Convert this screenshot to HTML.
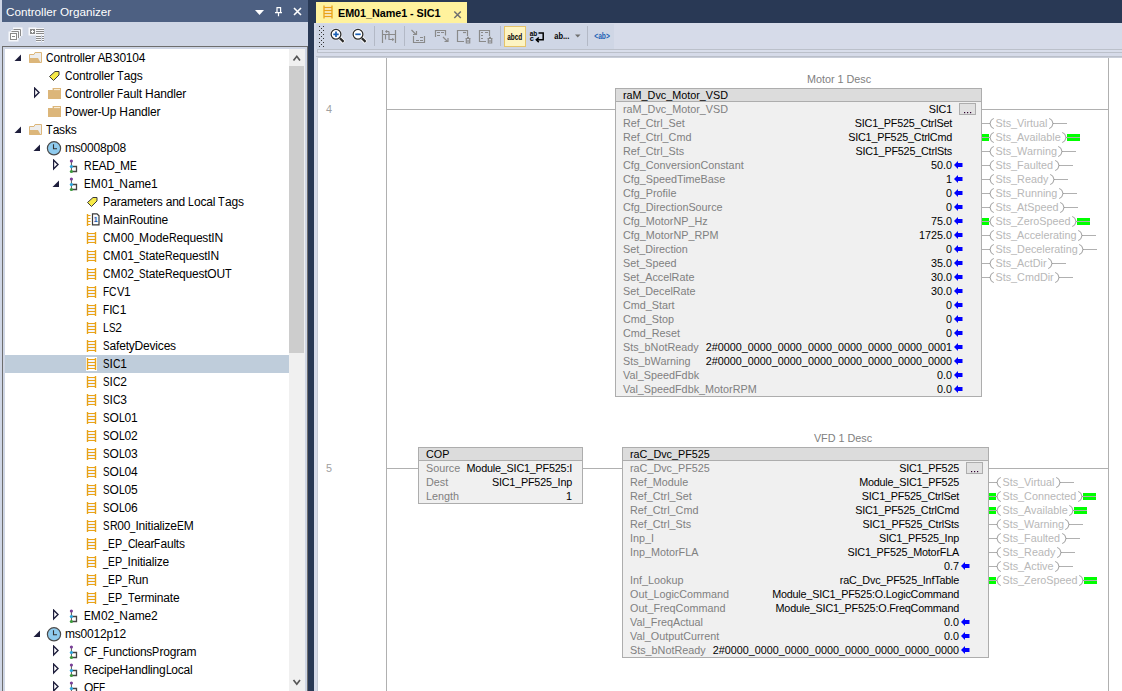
<!DOCTYPE html><html><head><meta charset="utf-8"><style>
*{margin:0;padding:0;box-sizing:border-box}
html,body{width:1122px;height:691px;overflow:hidden;background:#293955;font-family:"Liberation Sans",sans-serif}
.a{position:absolute}
.t{position:absolute;white-space:pre;line-height:1}
#lp{left:0;top:0;width:308px;height:691px;background:#cfd6e5}
#ttl{left:2px;top:0;width:306px;height:22px;background:#4d6082}
#tree{left:2px;top:46px;width:306px;height:645px;background:#cfd6e5;border:1px solid #6d6d6d;border-bottom:0}
.tr{position:absolute;font-size:12px;color:#000;white-space:pre;line-height:1}
.lb{font-size:10.8px;color:#808080}
.vl{font-size:10.8px;color:#000}
.coil{font-size:10.8px;color:#b4b4b4}
</style></head><body><div id="lp" class="a"></div><div id="ttl" class="a"></div><div class="t" style="left:6px;top:5.6px;font-size:11.7px;color:#fff">Controller Organizer</div><svg class="a" style="left:250px;top:4px" width="56" height="16" viewBox="0 0 56 16"><path d="M5 6 L14 6 L9.5 11 Z" fill="#fff"/><path d="M26.5 3.7 H31 M27 3.3 V8.5 M30.6 3.3 V8.5 M25 8.6 H32 M28.5 8.6 V12.3" stroke="#fff" stroke-width="1.2" fill="none"/><path d="M44 4 L51 11 M51 4 L44 11" stroke="#fff" stroke-width="1.6"/></svg><svg class="a" style="left:0px;top:22px" width="50" height="24" viewBox="0 22 50 24"><g fill="none" stroke="#fff" stroke-width="3" opacity="0.85"><path d="M13 29 H21 V36 M11 31.5 H19 V38"/><rect x="10" y="33" width="7" height="7"/><rect x="30" y="29" width="5" height="5"/><path d="M36 29.5 H44 M36 31.5 H44 M36 33.5 H44 M36 36.5 H41 M42 36.5 H44 M36 38.5 H41 M42 38.5 H44 M36 40.5 H41 M42 40.5 H44"/></g><g fill="none" stroke="#8a8a8a" stroke-width="1"><path d="M13.5 29.5 H20.5 V36 M11.5 31.5 H18.5 V38"/><rect x="10.5" y="33.5" width="6" height="6" fill="#fff"/><path d="M12 36.5 H15"/><path d="M36 29.5 H44 M36 31.5 H44 M36 33.5 H44 M36 36.5 H41 M42 36.5 H44 M36 38.5 H41 M42 38.5 H44 M36 40.5 H41 M42 40.5 H44"/></g><rect x="30" y="29" width="5" height="5" fill="#8a8a8a"/><path d="M32.5 30 V33 M31 31.5 H34" stroke="#fff" stroke-width="1"/></svg><div id="tree" class="a"></div><div class="a" style="left:5px;top:49px;width:300px;height:642px;background:#fff"></div><svg class="a" style="left:14px;top:53px" width="8" height="9" viewBox="0 0 8 9"><path d="M0.5 8 L7 1.5 V8 Z" fill="#1e1e3c"/></svg><svg class="a" style="left:27px;top:49px" width="16" height="18" viewBox="0 0 16 18"><path d="M2.5 13.5 V5.5 H7 L8 3.5 H14.5 V13.5 Z" fill="#ededed" stroke="#dcb67a" stroke-width="1"/><path d="M2 9 H11 L13.8 14 H2.5 Z" fill="#dcb67a"/></svg><div class="tr" style="left:46px;top:52px;font-size:12px"><span style="display:inline-block;width:7.47px;transform:scaleX(0.862);transform-origin:0 0">C</span><span style="letter-spacing:-0.20px">o</span><span style="letter-spacing:-0.20px">n</span><span style="letter-spacing:-0.20px">t</span><span style="letter-spacing:-0.20px">r</span><span style="letter-spacing:-0.20px">o</span><span style="letter-spacing:-0.20px">l</span><span style="letter-spacing:-0.20px">l</span><span style="letter-spacing:-0.20px">e</span><span style="letter-spacing:-0.20px">r</span><span style="letter-spacing:-0.20px"> </span><span style="letter-spacing:-0.20px">A</span><span style="display:inline-block;width:7.52px;transform:scaleX(0.938);transform-origin:0 0">B</span><span style="letter-spacing:-0.20px">3</span><span style="letter-spacing:-0.20px">0</span><span style="letter-spacing:-0.20px">1</span><span style="letter-spacing:-0.20px">0</span><span style="letter-spacing:-0.20px">4</span></div><svg class="a" style="left:46px;top:67px" width="16" height="18" viewBox="0 0 16 18"><path d="M3.5 9.5 L9 4.5 H13 V8 L7.5 13.5 Z" fill="#f7ea48" stroke="#3a3a3a" stroke-width="1"/></svg><div class="tr" style="left:65px;top:70px;font-size:12px"><span style="display:inline-block;width:7.47px;transform:scaleX(0.862);transform-origin:0 0">C</span><span style="letter-spacing:-0.20px">o</span><span style="letter-spacing:-0.20px">n</span><span style="letter-spacing:-0.20px">t</span><span style="letter-spacing:-0.20px">r</span><span style="letter-spacing:-0.20px">o</span><span style="letter-spacing:-0.20px">l</span><span style="letter-spacing:-0.20px">l</span><span style="letter-spacing:-0.20px">e</span><span style="letter-spacing:-0.20px">r</span><span style="letter-spacing:-0.20px"> </span><span style="display:inline-block;width:6.64px;transform:scaleX(0.905);transform-origin:0 0">T</span><span style="letter-spacing:-0.20px">a</span><span style="letter-spacing:-0.20px">g</span><span style="letter-spacing:-0.20px">s</span></div><svg class="a" style="left:34px;top:87px" width="8" height="12" viewBox="0 0 8 12"><path d="M0.5 1 L5 5.5 L0.5 10 Z" fill="none" stroke="#1e1e3c" stroke-width="1.4"/></svg><svg class="a" style="left:46px;top:85px" width="16" height="18" viewBox="0 0 16 18"><rect x="2" y="5" width="13" height="9" fill="#dcb67a"/><rect x="6.6" y="3" width="8.4" height="3" fill="#dcb67a"/><path d="M8 4.6 H14" stroke="#fbf3e2" stroke-width="1"/></svg><div class="tr" style="left:65px;top:88px;font-size:12px"><span style="display:inline-block;width:7.47px;transform:scaleX(0.862);transform-origin:0 0">C</span><span style="letter-spacing:-0.20px">o</span><span style="letter-spacing:-0.20px">n</span><span style="letter-spacing:-0.20px">t</span><span style="letter-spacing:-0.20px">r</span><span style="letter-spacing:-0.20px">o</span><span style="letter-spacing:-0.20px">l</span><span style="letter-spacing:-0.20px">l</span><span style="letter-spacing:-0.20px">e</span><span style="letter-spacing:-0.20px">r</span><span style="letter-spacing:-0.20px"> </span><span style="display:inline-block;width:6.14px;transform:scaleX(0.837);transform-origin:0 0">F</span><span style="letter-spacing:-0.20px">a</span><span style="letter-spacing:-0.20px">u</span><span style="letter-spacing:-0.20px">l</span><span style="letter-spacing:-0.20px">t</span><span style="letter-spacing:-0.20px"> </span><span style="letter-spacing:0.10px">H</span><span style="letter-spacing:-0.20px">a</span><span style="letter-spacing:-0.20px">n</span><span style="letter-spacing:-0.20px">d</span><span style="letter-spacing:-0.20px">l</span><span style="letter-spacing:-0.20px">e</span><span style="letter-spacing:-0.20px">r</span></div><svg class="a" style="left:46px;top:103px" width="16" height="18" viewBox="0 0 16 18"><rect x="2" y="5" width="13" height="9" fill="#dcb67a"/><rect x="6.6" y="3" width="8.4" height="3" fill="#dcb67a"/><path d="M8 4.6 H14" stroke="#fbf3e2" stroke-width="1"/></svg><div class="tr" style="left:65px;top:106px;font-size:12px"><span style="display:inline-block;width:7.22px;transform:scaleX(0.900);transform-origin:0 0">P</span><span style="letter-spacing:-0.20px">o</span><span style="letter-spacing:-0.20px">w</span><span style="letter-spacing:-0.20px">e</span><span style="letter-spacing:-0.20px">r</span><span style="letter-spacing:-0.20px">-</span><span style="letter-spacing:-0.20px">U</span><span style="letter-spacing:-0.20px">p</span><span style="letter-spacing:-0.20px"> </span><span style="letter-spacing:0.10px">H</span><span style="letter-spacing:-0.20px">a</span><span style="letter-spacing:-0.20px">n</span><span style="letter-spacing:-0.20px">d</span><span style="letter-spacing:-0.20px">l</span><span style="letter-spacing:-0.20px">e</span><span style="letter-spacing:-0.20px">r</span></div><svg class="a" style="left:14px;top:125px" width="8" height="9" viewBox="0 0 8 9"><path d="M0.5 8 L7 1.5 V8 Z" fill="#1e1e3c"/></svg><svg class="a" style="left:27px;top:121px" width="16" height="18" viewBox="0 0 16 18"><path d="M2.5 13.5 V5.5 H7 L8 3.5 H14.5 V13.5 Z" fill="#ededed" stroke="#dcb67a" stroke-width="1"/><path d="M2 9 H11 L13.8 14 H2.5 Z" fill="#dcb67a"/></svg><div class="tr" style="left:46px;top:124px;font-size:12px"><span style="display:inline-block;width:6.64px;transform:scaleX(0.905);transform-origin:0 0">T</span><span style="letter-spacing:-0.20px">a</span><span style="letter-spacing:-0.20px">s</span><span style="letter-spacing:-0.20px">k</span><span style="letter-spacing:-0.20px">s</span></div><svg class="a" style="left:33px;top:143px" width="8" height="9" viewBox="0 0 8 9"><path d="M0.5 8 L7 1.5 V8 Z" fill="#1e1e3c"/></svg><svg class="a" style="left:46px;top:139px" width="16" height="18" viewBox="0 0 16 18"><circle cx="8" cy="9.3" r="6.6" fill="#8fcbee" stroke="#4a4a4a" stroke-width="1.2"/><path d="M7.5 5.3 V9.8 H11" stroke="#333" stroke-width="1.1" fill="none"/></svg><div class="tr" style="left:65px;top:142px;font-size:12px"><span style="letter-spacing:-0.20px">m</span><span style="letter-spacing:-0.20px">s</span><span style="letter-spacing:-0.20px">0</span><span style="letter-spacing:-0.20px">0</span><span style="letter-spacing:-0.20px">0</span><span style="letter-spacing:-0.20px">8</span><span style="letter-spacing:-0.20px">p</span><span style="letter-spacing:-0.20px">0</span><span style="letter-spacing:-0.20px">8</span></div><svg class="a" style="left:53px;top:159px" width="8" height="12" viewBox="0 0 8 12"><path d="M0.5 1 L5 5.5 L0.5 10 Z" fill="none" stroke="#1e1e3c" stroke-width="1.4"/></svg><svg class="a" style="left:65px;top:157px" width="16" height="18" viewBox="0 0 16 18"><path d="M6.4 4 V14.5" stroke="#555" stroke-width="1"/><path d="M6.4 9.5 H11.5 V14.5 H6.4" stroke="#444" stroke-width="1.3" fill="none"/><circle cx="6.4" cy="4" r="1.6" fill="#7a3f98"/><circle cx="6.4" cy="9.5" r="1.6" fill="#2aa6e0"/><circle cx="6.4" cy="14.5" r="1.6" fill="#3a9a3a"/></svg><div class="tr" style="left:84px;top:160px;font-size:12px"><span style="display:inline-block;width:7.67px;transform:scaleX(0.885);transform-origin:0 0">R</span><span style="display:inline-block;width:6.82px;transform:scaleX(0.850);transform-origin:0 0">E</span><span style="letter-spacing:-0.20px">A</span><span style="letter-spacing:-0.20px">D</span><span style="display:inline-block;width:5.29px;transform:scaleX(0.791);transform-origin:0 0">_</span><span style="letter-spacing:0.30px">M</span><span style="display:inline-block;width:6.82px;transform:scaleX(0.850);transform-origin:0 0">E</span></div><svg class="a" style="left:52px;top:179px" width="8" height="9" viewBox="0 0 8 9"><path d="M0.5 8 L7 1.5 V8 Z" fill="#1e1e3c"/></svg><svg class="a" style="left:65px;top:175px" width="16" height="18" viewBox="0 0 16 18"><path d="M6.4 4 V14.5" stroke="#555" stroke-width="1"/><path d="M6.4 9.5 H11.5 V14.5 H6.4" stroke="#444" stroke-width="1.3" fill="none"/><circle cx="6.4" cy="4" r="1.6" fill="#7a3f98"/><circle cx="6.4" cy="9.5" r="1.6" fill="#2aa6e0"/><circle cx="6.4" cy="14.5" r="1.6" fill="#3a9a3a"/></svg><div class="tr" style="left:84px;top:178px;font-size:12px"><span style="display:inline-block;width:6.82px;transform:scaleX(0.850);transform-origin:0 0">E</span><span style="letter-spacing:0.30px">M</span><span style="letter-spacing:-0.20px">0</span><span style="letter-spacing:-0.20px">1</span><span style="display:inline-block;width:5.29px;transform:scaleX(0.791);transform-origin:0 0">_</span><span style="letter-spacing:0.30px">N</span><span style="letter-spacing:-0.20px">a</span><span style="letter-spacing:-0.20px">m</span><span style="letter-spacing:-0.20px">e</span><span style="letter-spacing:-0.20px">1</span></div><svg class="a" style="left:84px;top:193px" width="16" height="18" viewBox="0 0 16 18"><path d="M3.5 9.5 L9 4.5 H13 V8 L7.5 13.5 Z" fill="#f7ea48" stroke="#3a3a3a" stroke-width="1"/></svg><div class="tr" style="left:103px;top:196px;font-size:12px"><span style="display:inline-block;width:7.22px;transform:scaleX(0.900);transform-origin:0 0">P</span><span style="letter-spacing:-0.20px">a</span><span style="letter-spacing:-0.20px">r</span><span style="letter-spacing:-0.20px">a</span><span style="letter-spacing:-0.20px">m</span><span style="letter-spacing:-0.20px">e</span><span style="letter-spacing:-0.20px">t</span><span style="letter-spacing:-0.20px">e</span><span style="letter-spacing:-0.20px">r</span><span style="letter-spacing:-0.20px">s</span><span style="letter-spacing:-0.20px"> </span><span style="letter-spacing:-0.20px">a</span><span style="letter-spacing:-0.20px">n</span><span style="letter-spacing:-0.20px">d</span><span style="letter-spacing:-0.20px"> </span><span style="display:inline-block;width:5.79px;transform:scaleX(0.865);transform-origin:0 0">L</span><span style="letter-spacing:-0.20px">o</span><span style="letter-spacing:-0.20px">c</span><span style="letter-spacing:-0.20px">a</span><span style="letter-spacing:-0.20px">l</span><span style="letter-spacing:-0.20px"> </span><span style="display:inline-block;width:6.64px;transform:scaleX(0.905);transform-origin:0 0">T</span><span style="letter-spacing:-0.20px">a</span><span style="letter-spacing:-0.20px">g</span><span style="letter-spacing:-0.20px">s</span></div><svg class="a" style="left:84px;top:211px" width="16" height="18" viewBox="0 0 16 18"><path d="M3.5 3 V15" stroke="#e9a318" stroke-width="1.4" fill="none"/><path d="M3.5 4.5 H6.5 M3.5 7.5 H6.5 M3.5 10.5 H6.5 M3.5 13.5 H6.5" stroke="#e9a318" stroke-width="1.1" fill="none"/><path d="M8.5 2.8 H13 L15 4.8 V13.8 H8.5 Z" fill="#fff" stroke="#3a3a3a" stroke-width="1.2"/><rect x="10" y="5.5" width="3.6" height="6" fill="#e8eef8"/><text x="11.8" y="11.2" font-size="7" font-weight="bold" fill="#1e5bb0" text-anchor="middle" font-family="Liberation Sans">1</text></svg><div class="tr" style="left:103px;top:214px;font-size:12px"><span style="letter-spacing:0.30px">M</span><span style="letter-spacing:-0.20px">a</span><span style="letter-spacing:-0.20px">i</span><span style="letter-spacing:-0.20px">n</span><span style="display:inline-block;width:7.67px;transform:scaleX(0.885);transform-origin:0 0">R</span><span style="letter-spacing:-0.20px">o</span><span style="letter-spacing:-0.20px">u</span><span style="letter-spacing:-0.20px">t</span><span style="letter-spacing:-0.20px">i</span><span style="letter-spacing:-0.20px">n</span><span style="letter-spacing:-0.20px">e</span></div><svg class="a" style="left:84px;top:229px" width="16" height="18" viewBox="0 0 16 18"><rect x="3.5" y="4" width="8" height="10" fill="#f4f6fb"/><path d="M3.5 3 V15 M11.5 3 V15" stroke="#e9a318" stroke-width="1.4" fill="none"/><path d="M3.5 4.5 H11.5 M3.5 7.5 H11.5 M3.5 10.5 H11.5 M3.5 13.5 H11.5" stroke="#e9a318" stroke-width="1.1" fill="none"/></svg><div class="tr" style="left:103px;top:232px;font-size:12px"><span style="display:inline-block;width:7.47px;transform:scaleX(0.862);transform-origin:0 0">C</span><span style="letter-spacing:0.30px">M</span><span style="letter-spacing:-0.20px">0</span><span style="letter-spacing:-0.20px">0</span><span style="display:inline-block;width:5.29px;transform:scaleX(0.791);transform-origin:0 0">_</span><span style="letter-spacing:0.30px">M</span><span style="letter-spacing:-0.20px">o</span><span style="letter-spacing:-0.20px">d</span><span style="letter-spacing:-0.20px">e</span><span style="display:inline-block;width:7.67px;transform:scaleX(0.885);transform-origin:0 0">R</span><span style="letter-spacing:-0.20px">e</span><span style="letter-spacing:-0.20px">q</span><span style="letter-spacing:-0.20px">u</span><span style="letter-spacing:-0.20px">e</span><span style="letter-spacing:-0.20px">s</span><span style="letter-spacing:-0.20px">t</span><span style="letter-spacing:-0.20px">I</span><span style="letter-spacing:0.30px">N</span></div><svg class="a" style="left:84px;top:247px" width="16" height="18" viewBox="0 0 16 18"><rect x="3.5" y="4" width="8" height="10" fill="#f4f6fb"/><path d="M3.5 3 V15 M11.5 3 V15" stroke="#e9a318" stroke-width="1.4" fill="none"/><path d="M3.5 4.5 H11.5 M3.5 7.5 H11.5 M3.5 10.5 H11.5 M3.5 13.5 H11.5" stroke="#e9a318" stroke-width="1.1" fill="none"/></svg><div class="tr" style="left:103px;top:250px;font-size:12px"><span style="display:inline-block;width:7.47px;transform:scaleX(0.862);transform-origin:0 0">C</span><span style="letter-spacing:0.30px">M</span><span style="letter-spacing:-0.20px">0</span><span style="letter-spacing:-0.20px">1</span><span style="display:inline-block;width:5.29px;transform:scaleX(0.791);transform-origin:0 0">_</span><span style="display:inline-block;width:6.52px;transform:scaleX(0.813);transform-origin:0 0">S</span><span style="letter-spacing:-0.20px">t</span><span style="letter-spacing:-0.20px">a</span><span style="letter-spacing:-0.20px">t</span><span style="letter-spacing:-0.20px">e</span><span style="display:inline-block;width:7.67px;transform:scaleX(0.885);transform-origin:0 0">R</span><span style="letter-spacing:-0.20px">e</span><span style="letter-spacing:-0.20px">q</span><span style="letter-spacing:-0.20px">u</span><span style="letter-spacing:-0.20px">e</span><span style="letter-spacing:-0.20px">s</span><span style="letter-spacing:-0.20px">t</span><span style="letter-spacing:-0.20px">I</span><span style="letter-spacing:0.30px">N</span></div><svg class="a" style="left:84px;top:265px" width="16" height="18" viewBox="0 0 16 18"><rect x="3.5" y="4" width="8" height="10" fill="#f4f6fb"/><path d="M3.5 3 V15 M11.5 3 V15" stroke="#e9a318" stroke-width="1.4" fill="none"/><path d="M3.5 4.5 H11.5 M3.5 7.5 H11.5 M3.5 10.5 H11.5 M3.5 13.5 H11.5" stroke="#e9a318" stroke-width="1.1" fill="none"/></svg><div class="tr" style="left:103px;top:268px;font-size:12px"><span style="display:inline-block;width:7.47px;transform:scaleX(0.862);transform-origin:0 0">C</span><span style="letter-spacing:0.30px">M</span><span style="letter-spacing:-0.20px">0</span><span style="letter-spacing:-0.20px">2</span><span style="display:inline-block;width:5.29px;transform:scaleX(0.791);transform-origin:0 0">_</span><span style="display:inline-block;width:6.52px;transform:scaleX(0.813);transform-origin:0 0">S</span><span style="letter-spacing:-0.20px">t</span><span style="letter-spacing:-0.20px">a</span><span style="letter-spacing:-0.20px">t</span><span style="letter-spacing:-0.20px">e</span><span style="display:inline-block;width:7.67px;transform:scaleX(0.885);transform-origin:0 0">R</span><span style="letter-spacing:-0.20px">e</span><span style="letter-spacing:-0.20px">q</span><span style="letter-spacing:-0.20px">u</span><span style="letter-spacing:-0.20px">e</span><span style="letter-spacing:-0.20px">s</span><span style="letter-spacing:-0.20px">t</span><span style="letter-spacing:-0.20px">O</span><span style="letter-spacing:-0.20px">U</span><span style="display:inline-block;width:6.64px;transform:scaleX(0.905);transform-origin:0 0">T</span></div><svg class="a" style="left:84px;top:283px" width="16" height="18" viewBox="0 0 16 18"><rect x="3.5" y="4" width="8" height="10" fill="#f4f6fb"/><path d="M3.5 3 V15 M11.5 3 V15" stroke="#e9a318" stroke-width="1.4" fill="none"/><path d="M3.5 4.5 H11.5 M3.5 7.5 H11.5 M3.5 10.5 H11.5 M3.5 13.5 H11.5" stroke="#e9a318" stroke-width="1.1" fill="none"/></svg><div class="tr" style="left:103px;top:286px;font-size:12px"><span style="display:inline-block;width:6.14px;transform:scaleX(0.837);transform-origin:0 0">F</span><span style="display:inline-block;width:7.47px;transform:scaleX(0.862);transform-origin:0 0">C</span><span style="display:inline-block;width:7.42px;transform:scaleX(0.925);transform-origin:0 0">V</span><span style="letter-spacing:-0.20px">1</span></div><svg class="a" style="left:84px;top:301px" width="16" height="18" viewBox="0 0 16 18"><rect x="3.5" y="4" width="8" height="10" fill="#f4f6fb"/><path d="M3.5 3 V15 M11.5 3 V15" stroke="#e9a318" stroke-width="1.4" fill="none"/><path d="M3.5 4.5 H11.5 M3.5 7.5 H11.5 M3.5 10.5 H11.5 M3.5 13.5 H11.5" stroke="#e9a318" stroke-width="1.1" fill="none"/></svg><div class="tr" style="left:103px;top:304px;font-size:12px"><span style="display:inline-block;width:6.14px;transform:scaleX(0.837);transform-origin:0 0">F</span><span style="letter-spacing:-0.20px">I</span><span style="display:inline-block;width:7.47px;transform:scaleX(0.862);transform-origin:0 0">C</span><span style="letter-spacing:-0.20px">1</span></div><svg class="a" style="left:84px;top:319px" width="16" height="18" viewBox="0 0 16 18"><rect x="3.5" y="4" width="8" height="10" fill="#f4f6fb"/><path d="M3.5 3 V15 M11.5 3 V15" stroke="#e9a318" stroke-width="1.4" fill="none"/><path d="M3.5 4.5 H11.5 M3.5 7.5 H11.5 M3.5 10.5 H11.5 M3.5 13.5 H11.5" stroke="#e9a318" stroke-width="1.1" fill="none"/></svg><div class="tr" style="left:103px;top:322px;font-size:12px"><span style="display:inline-block;width:5.79px;transform:scaleX(0.865);transform-origin:0 0">L</span><span style="display:inline-block;width:6.52px;transform:scaleX(0.813);transform-origin:0 0">S</span><span style="letter-spacing:-0.20px">2</span></div><svg class="a" style="left:84px;top:337px" width="16" height="18" viewBox="0 0 16 18"><rect x="3.5" y="4" width="8" height="10" fill="#f4f6fb"/><path d="M3.5 3 V15 M11.5 3 V15" stroke="#e9a318" stroke-width="1.4" fill="none"/><path d="M3.5 4.5 H11.5 M3.5 7.5 H11.5 M3.5 10.5 H11.5 M3.5 13.5 H11.5" stroke="#e9a318" stroke-width="1.1" fill="none"/></svg><div class="tr" style="left:103px;top:340px;font-size:12px"><span style="display:inline-block;width:6.52px;transform:scaleX(0.813);transform-origin:0 0">S</span><span style="letter-spacing:-0.20px">a</span><span style="letter-spacing:-0.20px">f</span><span style="letter-spacing:-0.20px">e</span><span style="letter-spacing:-0.20px">t</span><span style="letter-spacing:-0.20px">y</span><span style="letter-spacing:-0.20px">D</span><span style="letter-spacing:-0.20px">e</span><span style="letter-spacing:-0.20px">v</span><span style="letter-spacing:-0.20px">i</span><span style="letter-spacing:-0.20px">c</span><span style="letter-spacing:-0.20px">e</span><span style="letter-spacing:-0.20px">s</span></div><div class="a" style="left:5px;top:355px;width:284px;height:18px;background:#bfcddb"></div><svg class="a" style="left:84px;top:355px" width="16" height="18" viewBox="0 0 16 18"><rect x="2" y="2" width="11" height="14" fill="#fff"/><rect x="3.5" y="4" width="8" height="10" fill="#f4f6fb"/><path d="M3.5 3 V15 M11.5 3 V15" stroke="#e9a318" stroke-width="1.4" fill="none"/><path d="M3.5 4.5 H11.5 M3.5 7.5 H11.5 M3.5 10.5 H11.5 M3.5 13.5 H11.5" stroke="#e9a318" stroke-width="1.1" fill="none"/></svg><div class="tr" style="left:103px;top:358px;font-size:12px"><span style="display:inline-block;width:6.52px;transform:scaleX(0.813);transform-origin:0 0">S</span><span style="letter-spacing:-0.20px">I</span><span style="display:inline-block;width:7.47px;transform:scaleX(0.862);transform-origin:0 0">C</span><span style="letter-spacing:-0.20px">1</span></div><svg class="a" style="left:84px;top:373px" width="16" height="18" viewBox="0 0 16 18"><rect x="3.5" y="4" width="8" height="10" fill="#f4f6fb"/><path d="M3.5 3 V15 M11.5 3 V15" stroke="#e9a318" stroke-width="1.4" fill="none"/><path d="M3.5 4.5 H11.5 M3.5 7.5 H11.5 M3.5 10.5 H11.5 M3.5 13.5 H11.5" stroke="#e9a318" stroke-width="1.1" fill="none"/></svg><div class="tr" style="left:103px;top:376px;font-size:12px"><span style="display:inline-block;width:6.52px;transform:scaleX(0.813);transform-origin:0 0">S</span><span style="letter-spacing:-0.20px">I</span><span style="display:inline-block;width:7.47px;transform:scaleX(0.862);transform-origin:0 0">C</span><span style="letter-spacing:-0.20px">2</span></div><svg class="a" style="left:84px;top:391px" width="16" height="18" viewBox="0 0 16 18"><rect x="3.5" y="4" width="8" height="10" fill="#f4f6fb"/><path d="M3.5 3 V15 M11.5 3 V15" stroke="#e9a318" stroke-width="1.4" fill="none"/><path d="M3.5 4.5 H11.5 M3.5 7.5 H11.5 M3.5 10.5 H11.5 M3.5 13.5 H11.5" stroke="#e9a318" stroke-width="1.1" fill="none"/></svg><div class="tr" style="left:103px;top:394px;font-size:12px"><span style="display:inline-block;width:6.52px;transform:scaleX(0.813);transform-origin:0 0">S</span><span style="letter-spacing:-0.20px">I</span><span style="display:inline-block;width:7.47px;transform:scaleX(0.862);transform-origin:0 0">C</span><span style="letter-spacing:-0.20px">3</span></div><svg class="a" style="left:84px;top:409px" width="16" height="18" viewBox="0 0 16 18"><rect x="3.5" y="4" width="8" height="10" fill="#f4f6fb"/><path d="M3.5 3 V15 M11.5 3 V15" stroke="#e9a318" stroke-width="1.4" fill="none"/><path d="M3.5 4.5 H11.5 M3.5 7.5 H11.5 M3.5 10.5 H11.5 M3.5 13.5 H11.5" stroke="#e9a318" stroke-width="1.1" fill="none"/></svg><div class="tr" style="left:103px;top:412px;font-size:12px"><span style="display:inline-block;width:6.52px;transform:scaleX(0.813);transform-origin:0 0">S</span><span style="letter-spacing:-0.20px">O</span><span style="display:inline-block;width:5.79px;transform:scaleX(0.865);transform-origin:0 0">L</span><span style="letter-spacing:-0.20px">0</span><span style="letter-spacing:-0.20px">1</span></div><svg class="a" style="left:84px;top:427px" width="16" height="18" viewBox="0 0 16 18"><rect x="3.5" y="4" width="8" height="10" fill="#f4f6fb"/><path d="M3.5 3 V15 M11.5 3 V15" stroke="#e9a318" stroke-width="1.4" fill="none"/><path d="M3.5 4.5 H11.5 M3.5 7.5 H11.5 M3.5 10.5 H11.5 M3.5 13.5 H11.5" stroke="#e9a318" stroke-width="1.1" fill="none"/></svg><div class="tr" style="left:103px;top:430px;font-size:12px"><span style="display:inline-block;width:6.52px;transform:scaleX(0.813);transform-origin:0 0">S</span><span style="letter-spacing:-0.20px">O</span><span style="display:inline-block;width:5.79px;transform:scaleX(0.865);transform-origin:0 0">L</span><span style="letter-spacing:-0.20px">0</span><span style="letter-spacing:-0.20px">2</span></div><svg class="a" style="left:84px;top:445px" width="16" height="18" viewBox="0 0 16 18"><rect x="3.5" y="4" width="8" height="10" fill="#f4f6fb"/><path d="M3.5 3 V15 M11.5 3 V15" stroke="#e9a318" stroke-width="1.4" fill="none"/><path d="M3.5 4.5 H11.5 M3.5 7.5 H11.5 M3.5 10.5 H11.5 M3.5 13.5 H11.5" stroke="#e9a318" stroke-width="1.1" fill="none"/></svg><div class="tr" style="left:103px;top:448px;font-size:12px"><span style="display:inline-block;width:6.52px;transform:scaleX(0.813);transform-origin:0 0">S</span><span style="letter-spacing:-0.20px">O</span><span style="display:inline-block;width:5.79px;transform:scaleX(0.865);transform-origin:0 0">L</span><span style="letter-spacing:-0.20px">0</span><span style="letter-spacing:-0.20px">3</span></div><svg class="a" style="left:84px;top:463px" width="16" height="18" viewBox="0 0 16 18"><rect x="3.5" y="4" width="8" height="10" fill="#f4f6fb"/><path d="M3.5 3 V15 M11.5 3 V15" stroke="#e9a318" stroke-width="1.4" fill="none"/><path d="M3.5 4.5 H11.5 M3.5 7.5 H11.5 M3.5 10.5 H11.5 M3.5 13.5 H11.5" stroke="#e9a318" stroke-width="1.1" fill="none"/></svg><div class="tr" style="left:103px;top:466px;font-size:12px"><span style="display:inline-block;width:6.52px;transform:scaleX(0.813);transform-origin:0 0">S</span><span style="letter-spacing:-0.20px">O</span><span style="display:inline-block;width:5.79px;transform:scaleX(0.865);transform-origin:0 0">L</span><span style="letter-spacing:-0.20px">0</span><span style="letter-spacing:-0.20px">4</span></div><svg class="a" style="left:84px;top:481px" width="16" height="18" viewBox="0 0 16 18"><rect x="3.5" y="4" width="8" height="10" fill="#f4f6fb"/><path d="M3.5 3 V15 M11.5 3 V15" stroke="#e9a318" stroke-width="1.4" fill="none"/><path d="M3.5 4.5 H11.5 M3.5 7.5 H11.5 M3.5 10.5 H11.5 M3.5 13.5 H11.5" stroke="#e9a318" stroke-width="1.1" fill="none"/></svg><div class="tr" style="left:103px;top:484px;font-size:12px"><span style="display:inline-block;width:6.52px;transform:scaleX(0.813);transform-origin:0 0">S</span><span style="letter-spacing:-0.20px">O</span><span style="display:inline-block;width:5.79px;transform:scaleX(0.865);transform-origin:0 0">L</span><span style="letter-spacing:-0.20px">0</span><span style="letter-spacing:-0.20px">5</span></div><svg class="a" style="left:84px;top:499px" width="16" height="18" viewBox="0 0 16 18"><rect x="3.5" y="4" width="8" height="10" fill="#f4f6fb"/><path d="M3.5 3 V15 M11.5 3 V15" stroke="#e9a318" stroke-width="1.4" fill="none"/><path d="M3.5 4.5 H11.5 M3.5 7.5 H11.5 M3.5 10.5 H11.5 M3.5 13.5 H11.5" stroke="#e9a318" stroke-width="1.1" fill="none"/></svg><div class="tr" style="left:103px;top:502px;font-size:12px"><span style="display:inline-block;width:6.52px;transform:scaleX(0.813);transform-origin:0 0">S</span><span style="letter-spacing:-0.20px">O</span><span style="display:inline-block;width:5.79px;transform:scaleX(0.865);transform-origin:0 0">L</span><span style="letter-spacing:-0.20px">0</span><span style="letter-spacing:-0.20px">6</span></div><svg class="a" style="left:84px;top:517px" width="16" height="18" viewBox="0 0 16 18"><rect x="3.5" y="4" width="8" height="10" fill="#f4f6fb"/><path d="M3.5 3 V15 M11.5 3 V15" stroke="#e9a318" stroke-width="1.4" fill="none"/><path d="M3.5 4.5 H11.5 M3.5 7.5 H11.5 M3.5 10.5 H11.5 M3.5 13.5 H11.5" stroke="#e9a318" stroke-width="1.1" fill="none"/></svg><div class="tr" style="left:103px;top:520px;font-size:12px"><span style="display:inline-block;width:6.52px;transform:scaleX(0.813);transform-origin:0 0">S</span><span style="display:inline-block;width:7.67px;transform:scaleX(0.885);transform-origin:0 0">R</span><span style="letter-spacing:-0.20px">0</span><span style="letter-spacing:-0.20px">0</span><span style="display:inline-block;width:5.29px;transform:scaleX(0.791);transform-origin:0 0">_</span><span style="letter-spacing:-0.20px">I</span><span style="letter-spacing:-0.20px">n</span><span style="letter-spacing:-0.20px">i</span><span style="letter-spacing:-0.20px">t</span><span style="letter-spacing:-0.20px">i</span><span style="letter-spacing:-0.20px">a</span><span style="letter-spacing:-0.20px">l</span><span style="letter-spacing:-0.20px">i</span><span style="letter-spacing:-0.20px">z</span><span style="letter-spacing:-0.20px">e</span><span style="display:inline-block;width:6.82px;transform:scaleX(0.850);transform-origin:0 0">E</span><span style="letter-spacing:0.30px">M</span></div><svg class="a" style="left:84px;top:535px" width="16" height="18" viewBox="0 0 16 18"><rect x="3.5" y="4" width="8" height="10" fill="#f4f6fb"/><path d="M3.5 3 V15 M11.5 3 V15" stroke="#e9a318" stroke-width="1.4" fill="none"/><path d="M3.5 4.5 H11.5 M3.5 7.5 H11.5 M3.5 10.5 H11.5 M3.5 13.5 H11.5" stroke="#e9a318" stroke-width="1.1" fill="none"/></svg><div class="tr" style="left:103px;top:538px;font-size:12px"><span style="display:inline-block;width:5.29px;transform:scaleX(0.791);transform-origin:0 0">_</span><span style="display:inline-block;width:6.82px;transform:scaleX(0.850);transform-origin:0 0">E</span><span style="display:inline-block;width:7.22px;transform:scaleX(0.900);transform-origin:0 0">P</span><span style="display:inline-block;width:5.29px;transform:scaleX(0.791);transform-origin:0 0">_</span><span style="display:inline-block;width:7.47px;transform:scaleX(0.862);transform-origin:0 0">C</span><span style="letter-spacing:-0.20px">l</span><span style="letter-spacing:-0.20px">e</span><span style="letter-spacing:-0.20px">a</span><span style="letter-spacing:-0.20px">r</span><span style="display:inline-block;width:6.14px;transform:scaleX(0.837);transform-origin:0 0">F</span><span style="letter-spacing:-0.20px">a</span><span style="letter-spacing:-0.20px">u</span><span style="letter-spacing:-0.20px">l</span><span style="letter-spacing:-0.20px">t</span><span style="letter-spacing:-0.20px">s</span></div><svg class="a" style="left:84px;top:553px" width="16" height="18" viewBox="0 0 16 18"><rect x="3.5" y="4" width="8" height="10" fill="#f4f6fb"/><path d="M3.5 3 V15 M11.5 3 V15" stroke="#e9a318" stroke-width="1.4" fill="none"/><path d="M3.5 4.5 H11.5 M3.5 7.5 H11.5 M3.5 10.5 H11.5 M3.5 13.5 H11.5" stroke="#e9a318" stroke-width="1.1" fill="none"/></svg><div class="tr" style="left:103px;top:556px;font-size:12px"><span style="display:inline-block;width:5.29px;transform:scaleX(0.791);transform-origin:0 0">_</span><span style="display:inline-block;width:6.82px;transform:scaleX(0.850);transform-origin:0 0">E</span><span style="display:inline-block;width:7.22px;transform:scaleX(0.900);transform-origin:0 0">P</span><span style="display:inline-block;width:5.29px;transform:scaleX(0.791);transform-origin:0 0">_</span><span style="letter-spacing:-0.20px">I</span><span style="letter-spacing:-0.20px">n</span><span style="letter-spacing:-0.20px">i</span><span style="letter-spacing:-0.20px">t</span><span style="letter-spacing:-0.20px">i</span><span style="letter-spacing:-0.20px">a</span><span style="letter-spacing:-0.20px">l</span><span style="letter-spacing:-0.20px">i</span><span style="letter-spacing:-0.20px">z</span><span style="letter-spacing:-0.20px">e</span></div><svg class="a" style="left:84px;top:571px" width="16" height="18" viewBox="0 0 16 18"><rect x="3.5" y="4" width="8" height="10" fill="#f4f6fb"/><path d="M3.5 3 V15 M11.5 3 V15" stroke="#e9a318" stroke-width="1.4" fill="none"/><path d="M3.5 4.5 H11.5 M3.5 7.5 H11.5 M3.5 10.5 H11.5 M3.5 13.5 H11.5" stroke="#e9a318" stroke-width="1.1" fill="none"/></svg><div class="tr" style="left:103px;top:574px;font-size:12px"><span style="display:inline-block;width:5.29px;transform:scaleX(0.791);transform-origin:0 0">_</span><span style="display:inline-block;width:6.82px;transform:scaleX(0.850);transform-origin:0 0">E</span><span style="display:inline-block;width:7.22px;transform:scaleX(0.900);transform-origin:0 0">P</span><span style="display:inline-block;width:5.29px;transform:scaleX(0.791);transform-origin:0 0">_</span><span style="display:inline-block;width:7.67px;transform:scaleX(0.885);transform-origin:0 0">R</span><span style="letter-spacing:-0.20px">u</span><span style="letter-spacing:-0.20px">n</span></div><svg class="a" style="left:84px;top:589px" width="16" height="18" viewBox="0 0 16 18"><rect x="3.5" y="4" width="8" height="10" fill="#f4f6fb"/><path d="M3.5 3 V15 M11.5 3 V15" stroke="#e9a318" stroke-width="1.4" fill="none"/><path d="M3.5 4.5 H11.5 M3.5 7.5 H11.5 M3.5 10.5 H11.5 M3.5 13.5 H11.5" stroke="#e9a318" stroke-width="1.1" fill="none"/></svg><div class="tr" style="left:103px;top:592px;font-size:12px"><span style="display:inline-block;width:5.29px;transform:scaleX(0.791);transform-origin:0 0">_</span><span style="display:inline-block;width:6.82px;transform:scaleX(0.850);transform-origin:0 0">E</span><span style="display:inline-block;width:7.22px;transform:scaleX(0.900);transform-origin:0 0">P</span><span style="display:inline-block;width:5.29px;transform:scaleX(0.791);transform-origin:0 0">_</span><span style="display:inline-block;width:6.64px;transform:scaleX(0.905);transform-origin:0 0">T</span><span style="letter-spacing:-0.20px">e</span><span style="letter-spacing:-0.20px">r</span><span style="letter-spacing:-0.20px">m</span><span style="letter-spacing:-0.20px">i</span><span style="letter-spacing:-0.20px">n</span><span style="letter-spacing:-0.20px">a</span><span style="letter-spacing:-0.20px">t</span><span style="letter-spacing:-0.20px">e</span></div><svg class="a" style="left:53px;top:609px" width="8" height="12" viewBox="0 0 8 12"><path d="M0.5 1 L5 5.5 L0.5 10 Z" fill="none" stroke="#1e1e3c" stroke-width="1.4"/></svg><svg class="a" style="left:65px;top:607px" width="16" height="18" viewBox="0 0 16 18"><path d="M6.4 4 V14.5" stroke="#555" stroke-width="1"/><path d="M6.4 9.5 H11.5 V14.5 H6.4" stroke="#444" stroke-width="1.3" fill="none"/><circle cx="6.4" cy="4" r="1.6" fill="#7a3f98"/><circle cx="6.4" cy="9.5" r="1.6" fill="#2aa6e0"/><circle cx="6.4" cy="14.5" r="1.6" fill="#3a9a3a"/></svg><div class="tr" style="left:84px;top:610px;font-size:12px"><span style="display:inline-block;width:6.82px;transform:scaleX(0.850);transform-origin:0 0">E</span><span style="letter-spacing:0.30px">M</span><span style="letter-spacing:-0.20px">0</span><span style="letter-spacing:-0.20px">2</span><span style="display:inline-block;width:5.29px;transform:scaleX(0.791);transform-origin:0 0">_</span><span style="letter-spacing:0.30px">N</span><span style="letter-spacing:-0.20px">a</span><span style="letter-spacing:-0.20px">m</span><span style="letter-spacing:-0.20px">e</span><span style="letter-spacing:-0.20px">2</span></div><svg class="a" style="left:33px;top:629px" width="8" height="9" viewBox="0 0 8 9"><path d="M0.5 8 L7 1.5 V8 Z" fill="#1e1e3c"/></svg><svg class="a" style="left:46px;top:625px" width="16" height="18" viewBox="0 0 16 18"><circle cx="8" cy="9.3" r="6.6" fill="#8fcbee" stroke="#4a4a4a" stroke-width="1.2"/><path d="M7.5 5.3 V9.8 H11" stroke="#333" stroke-width="1.1" fill="none"/></svg><div class="tr" style="left:65px;top:628px;font-size:12px"><span style="letter-spacing:-0.20px">m</span><span style="letter-spacing:-0.20px">s</span><span style="letter-spacing:-0.20px">0</span><span style="letter-spacing:-0.20px">0</span><span style="letter-spacing:-0.20px">1</span><span style="letter-spacing:-0.20px">2</span><span style="letter-spacing:-0.20px">p</span><span style="letter-spacing:-0.20px">1</span><span style="letter-spacing:-0.20px">2</span></div><svg class="a" style="left:53px;top:645px" width="8" height="12" viewBox="0 0 8 12"><path d="M0.5 1 L5 5.5 L0.5 10 Z" fill="none" stroke="#1e1e3c" stroke-width="1.4"/></svg><svg class="a" style="left:65px;top:643px" width="16" height="18" viewBox="0 0 16 18"><path d="M6.4 4 V14.5" stroke="#555" stroke-width="1"/><path d="M6.4 9.5 H11.5 V14.5 H6.4" stroke="#444" stroke-width="1.3" fill="none"/><circle cx="6.4" cy="4" r="1.6" fill="#7a3f98"/><circle cx="6.4" cy="9.5" r="1.6" fill="#2aa6e0"/><circle cx="6.4" cy="14.5" r="1.6" fill="#3a9a3a"/></svg><div class="tr" style="left:84px;top:646px;font-size:12px"><span style="display:inline-block;width:7.47px;transform:scaleX(0.862);transform-origin:0 0">C</span><span style="display:inline-block;width:6.14px;transform:scaleX(0.837);transform-origin:0 0">F</span><span style="display:inline-block;width:5.29px;transform:scaleX(0.791);transform-origin:0 0">_</span><span style="display:inline-block;width:6.14px;transform:scaleX(0.837);transform-origin:0 0">F</span><span style="letter-spacing:-0.20px">u</span><span style="letter-spacing:-0.20px">n</span><span style="letter-spacing:-0.20px">c</span><span style="letter-spacing:-0.20px">t</span><span style="letter-spacing:-0.20px">i</span><span style="letter-spacing:-0.20px">o</span><span style="letter-spacing:-0.20px">n</span><span style="letter-spacing:-0.20px">s</span><span style="display:inline-block;width:7.22px;transform:scaleX(0.900);transform-origin:0 0">P</span><span style="letter-spacing:-0.20px">r</span><span style="letter-spacing:-0.20px">o</span><span style="letter-spacing:-0.20px">g</span><span style="letter-spacing:-0.20px">r</span><span style="letter-spacing:-0.20px">a</span><span style="letter-spacing:-0.20px">m</span></div><svg class="a" style="left:53px;top:663px" width="8" height="12" viewBox="0 0 8 12"><path d="M0.5 1 L5 5.5 L0.5 10 Z" fill="none" stroke="#1e1e3c" stroke-width="1.4"/></svg><svg class="a" style="left:65px;top:661px" width="16" height="18" viewBox="0 0 16 18"><path d="M6.4 4 V14.5" stroke="#555" stroke-width="1"/><path d="M6.4 9.5 H11.5 V14.5 H6.4" stroke="#444" stroke-width="1.3" fill="none"/><circle cx="6.4" cy="4" r="1.6" fill="#7a3f98"/><circle cx="6.4" cy="9.5" r="1.6" fill="#2aa6e0"/><circle cx="6.4" cy="14.5" r="1.6" fill="#3a9a3a"/></svg><div class="tr" style="left:84px;top:664px;font-size:12px"><span style="display:inline-block;width:7.67px;transform:scaleX(0.885);transform-origin:0 0">R</span><span style="letter-spacing:-0.20px">e</span><span style="letter-spacing:-0.20px">c</span><span style="letter-spacing:-0.20px">i</span><span style="letter-spacing:-0.20px">p</span><span style="letter-spacing:-0.20px">e</span><span style="letter-spacing:0.10px">H</span><span style="letter-spacing:-0.20px">a</span><span style="letter-spacing:-0.20px">n</span><span style="letter-spacing:-0.20px">d</span><span style="letter-spacing:-0.20px">l</span><span style="letter-spacing:-0.20px">i</span><span style="letter-spacing:-0.20px">n</span><span style="letter-spacing:-0.20px">g</span><span style="display:inline-block;width:5.79px;transform:scaleX(0.865);transform-origin:0 0">L</span><span style="letter-spacing:-0.20px">o</span><span style="letter-spacing:-0.20px">c</span><span style="letter-spacing:-0.20px">a</span><span style="letter-spacing:-0.20px">l</span></div><svg class="a" style="left:53px;top:681px" width="8" height="12" viewBox="0 0 8 12"><path d="M0.5 1 L5 5.5 L0.5 10 Z" fill="none" stroke="#1e1e3c" stroke-width="1.4"/></svg><svg class="a" style="left:65px;top:679px" width="16" height="18" viewBox="0 0 16 18"><path d="M6.4 4 V14.5" stroke="#555" stroke-width="1"/><path d="M6.4 9.5 H11.5 V14.5 H6.4" stroke="#444" stroke-width="1.3" fill="none"/><circle cx="6.4" cy="4" r="1.6" fill="#7a3f98"/><circle cx="6.4" cy="9.5" r="1.6" fill="#2aa6e0"/><circle cx="6.4" cy="14.5" r="1.6" fill="#3a9a3a"/></svg><div class="tr" style="left:84px;top:682px;font-size:12px"><span style="letter-spacing:-0.20px">O</span><span style="display:inline-block;width:6.14px;transform:scaleX(0.837);transform-origin:0 0">F</span><span style="display:inline-block;width:6.14px;transform:scaleX(0.837);transform-origin:0 0">F</span></div><div class="a" style="left:289px;top:49px;width:16px;height:642px;background:#f0f0f0"></div><div class="a" style="left:289px;top:66px;width:15px;height:287px;background:#cdcdcd"></div><svg class="a" style="left:289px;top:49px" width="16" height="17" viewBox="289 49 16 17"><path d="M293.5 60.5 L296.8 56.3 L300 60.5" stroke="#555" stroke-width="1.7" fill="none"/></svg><svg class="a" style="left:289px;top:674px" width="16" height="17" viewBox="0 0 16 17"><path d="M4.5 6 L7.8 10.2 L11 6" stroke="#555" stroke-width="1.7" fill="none"/></svg><div class="a" style="left:316px;top:2px;width:151px;height:22px;background:#fff29d"></div><svg class="a" style="left:320px;top:3px" width="16" height="18" viewBox="0 0 16 18"><rect x="4" y="3" width="8" height="12" fill="#fdf8e0"/><path d="M4 2.5 V15.5 M12 2.5 V15.5 M4 4.5 H12 M4 7.5 H12 M4 10.5 H12 M4 13.5 H12" stroke="#e9a318" stroke-width="1.3" fill="none"/></svg><div class="t" style="left:338px;top:8px;font-size:10.8px;font-weight:bold;color:#000;letter-spacing:-0.05px">EM01_Name1 - SIC1</div><svg class="a" style="left:452px;top:8.5px" width="11" height="11" viewBox="0 0 11 11"><path d="M2.3 2.5 L8.8 9 M8.8 2.5 L2.3 9" stroke="#6f6f6f" stroke-width="1.5"/></svg><div class="a" style="left:314px;top:23px;width:808px;height:668px;background:#d6dbe9"></div><div class="a" style="left:316px;top:24px;width:298px;height:25px;background:#cfd6e5"></div><div class="a" style="left:317px;top:49px;width:805px;height:4px;background:#d9deeb;border:1px solid #bbc0ca;border-right:0"></div><div class="a" style="left:316px;top:56px;width:806px;height:1px;background:#bbc0ca"></div><div class="a" style="left:317px;top:57px;width:805px;height:634px;background:#c8cdd8"></div><div class="a" style="left:318px;top:58px;width:804px;height:633px;background:#fff"></div><svg class="a" style="left:316px;top:23px" width="300" height="26" viewBox="316 23 300 26"><rect x="319" y="26" width="1" height="1" fill="#333"/><rect x="323" y="26" width="1" height="1" fill="#333"/><rect x="321" y="28" width="1" height="1" fill="#333"/><rect x="319" y="30" width="1" height="1" fill="#333"/><rect x="323" y="30" width="1" height="1" fill="#333"/><rect x="321" y="32" width="1" height="1" fill="#333"/><rect x="319" y="34" width="1" height="1" fill="#333"/><rect x="323" y="34" width="1" height="1" fill="#333"/><rect x="321" y="36" width="1" height="1" fill="#333"/><rect x="319" y="38" width="1" height="1" fill="#333"/><rect x="323" y="38" width="1" height="1" fill="#333"/><rect x="321" y="40" width="1" height="1" fill="#333"/><rect x="319" y="42" width="1" height="1" fill="#333"/><rect x="323" y="42" width="1" height="1" fill="#333"/><rect x="321" y="44" width="1" height="1" fill="#333"/><rect x="319" y="46" width="1" height="1" fill="#333"/><rect x="323" y="46" width="1" height="1" fill="#333"/><g><circle cx="336" cy="34.3" r="6" fill="#fff" opacity="0.8"/><circle cx="336" cy="34.3" r="4.9" fill="#fff" stroke="#2b2b2b" stroke-width="1.3"/><path d="M339.8 38.1 L344 42.3" stroke="#fff" stroke-width="4"/><path d="M339.8 38.1 L343.6 41.9" stroke="#2b2b2b" stroke-width="2.2"/><path d="M333.3 34.3 H338.7 M336 31.6 V37" stroke="#1a5fb4" stroke-width="1.7"/></g><g><circle cx="358" cy="34.3" r="6" fill="#fff" opacity="0.8"/><circle cx="358" cy="34.3" r="4.9" fill="#fff" stroke="#2b2b2b" stroke-width="1.3"/><path d="M361.8 38.1 L366 42.3" stroke="#fff" stroke-width="4"/><path d="M361.8 38.1 L365.6 41.9" stroke="#2b2b2b" stroke-width="2.2"/><path d="M355.3 34.3 H360.7" stroke="#1a5fb4" stroke-width="1.7"/></g><path d="M374.5 26 V46 M404.5 26 V46 M500.5 26 V46 M587.5 26 V46" stroke="#b3b9c6" stroke-width="1"/><g fill="none" stroke="#8a8a8a" stroke-width="1.2"><path d="M382.5 30 V43 M395.5 30 V43 M382.5 34.5 H395.5"/><path d="M389 31.5 H386 M387 30.3 L385.8 31.5 L387 32.7"/><path d="M389 31.5 V39.5 H393.5 M392.3 38.3 L393.5 39.5 L392.3 40.7"/><path d="M385.5 34.5 V39.5"/></g><g fill="none" stroke="#8a8a8a" stroke-width="1.2"><path d="M411.5 30 L416 34.5 M413 34.5 H416.5 V31"/><path d="M413.5 36 V42.5 H424.5 V36"/><path d="M420 37.5 H423 M416 40.5 H419 M420 40.5 H423"/></g><g fill="none" stroke="#8a8a8a" stroke-width="1.2"><path d="M435.5 37 V30.5 H445.5 V35.5"/><path d="M437 32.5 H440 M441 32.5 H444 M437 35.5 H440"/><path d="M443 37 L447.5 41.5 M444.5 41.5 H448 V38"/></g><g fill="none" stroke="#8a8a8a" stroke-width="1.2"><path d="M464 41.5 H457.5 V30.5 H467.5 V36"/><path d="M463 32.5 H466"/><path d="M465.5 38.5 H470.5 M466.3 38.5 V43 H469.7 V38.5 M468 40 V42 M467 37.3 H469"/></g><g fill="none" stroke="#8a8a8a" stroke-width="1.2"><path d="M486 41.5 H479.5 V30.5 H489.5 V36"/><path d="M481 32.5 H483 M485 32.5 H488 M481 35.5 H483 M481 38.5 H483"/><path d="M487.5 38.5 H492.5 M488.3 38.5 V43 H491.7 V38.5 M490 40 V42 M489 37.3 H491"/></g><rect x="504.5" y="26.5" width="21" height="20" fill="#fdf4c2" stroke="#e6c46a" stroke-width="1"/><text x="507.3" y="39.5" font-size="8.2" font-weight="bold" fill="#000" font-family="Liberation Sans" textLength="15" lengthAdjust="spacingAndGlyphs">abcd</text><text x="529.8" y="35.6" font-size="7.4" font-weight="bold" fill="#000" font-family="Liberation Sans" textLength="7.5" lengthAdjust="spacingAndGlyphs">ab</text><text x="529.8" y="40.8" font-size="7.4" font-weight="bold" fill="#000" font-family="Liberation Sans">c</text><path d="M538.5 33 H543.2 V39.8 H536.5 M538.8 37.5 L536.3 39.8 L538.8 42.1" stroke="#000" stroke-width="1.5" fill="none"/><text x="554.3" y="38.8" font-size="8.2" font-weight="bold" fill="#000" font-family="Liberation Sans" textLength="15" lengthAdjust="spacingAndGlyphs">ab...</text><path d="M575 34.5 H580.5 L577.75 37.5 Z" fill="#707070"/><text x="594.3" y="39.2" font-size="8.2" font-weight="bold" fill="#1a5fb4" font-family="Liberation Sans" textLength="15.5" lengthAdjust="spacingAndGlyphs">&lt;ab&gt;</text></svg><div class="a" style="left:386px;top:58px;width:1px;height:633px;background:#b0b0b0"></div><div class="a" style="left:1108px;top:58px;width:1px;height:633px;background:#b0b0b0"></div><div class="t" style="left:326px;top:104px;font-size:10.8px;color:#a0a0a0">4</div><div class="t" style="left:326px;top:463px;font-size:10.8px;color:#a0a0a0">5</div><div class="a" style="left:387px;top:109px;width:228px;height:1px;background:#b0b0b0"></div><div class="a" style="left:982px;top:109px;width:126px;height:1px;background:#b0b0b0"></div><div class="t" style="left:839px;top:74px;width:200px;margin-left:-100px;text-align:center;font-size:10.8px;color:#808080">Motor 1 Desc</div><div class="a" style="left:615px;top:88px;width:367px;height:309px;background:#f0f0f0;border:1px solid #adadad"></div><div class="a" style="left:616px;top:89px;width:365px;height:13px;background:#dcdcdc;border-bottom:1px solid #adadad"></div><div class="t" style="left:623px;top:90px;font-size:10.8px;color:#000">raM_Dvc_Motor_VSD</div><div class="t" style="left:623px;top:104px;font-size:10.8px;color:#808080">raM_Dvc_Motor_VSD</div><div class="t" style="right:170px;top:104px;font-size:10.8px;color:#000;letter-spacing:-0.2px">SIC1</div><div class="a" style="left:959px;top:103px;width:17px;height:12px;background:#e1e1e1;border:1px solid #adadad"></div><svg class="a" style="left:959px;top:103px" width="17" height="12" viewBox="0 0 17 12"><rect x="5" y="9" width="1.2" height="1.2" fill="#300030"/><rect x="8" y="9" width="1.2" height="1.2" fill="#300030"/><rect x="11" y="9" width="1.2" height="1.2" fill="#300030"/></svg><div class="t" style="left:623px;top:118px;font-size:10.8px;color:#808080">Ref_Ctrl_Set</div><div class="t" style="right:170px;top:118px;font-size:10.8px;color:#000;letter-spacing:-0.2px">SIC1_PF525_CtrlSet</div><div class="t" style="left:623px;top:132px;font-size:10.8px;color:#808080">Ref_Ctrl_Cmd</div><div class="t" style="right:170px;top:132px;font-size:10.8px;color:#000;letter-spacing:-0.2px">SIC1_PF525_CtrlCmd</div><div class="t" style="left:623px;top:146px;font-size:10.8px;color:#808080">Ref_Ctrl_Sts</div><div class="t" style="right:170px;top:146px;font-size:10.8px;color:#000;letter-spacing:-0.2px">SIC1_PF525_CtrlSts</div><div class="t" style="left:623px;top:160px;font-size:10.8px;color:#808080">Cfg_ConversionConstant</div><div class="t" style="right:170px;top:160px;font-size:10.8px;color:#000">50.0</div><svg class="a" style="left:954px;top:160px" width="10" height="10" viewBox="0 0 10 10"><path d="M0 5 L4 1 V3 H8.5 V7 H4 V9 Z" fill="#0000ff"/></svg><div class="t" style="left:623px;top:174px;font-size:10.8px;color:#808080">Cfg_SpeedTimeBase</div><div class="t" style="right:170px;top:174px;font-size:10.8px;color:#000">1</div><svg class="a" style="left:954px;top:174px" width="10" height="10" viewBox="0 0 10 10"><path d="M0 5 L4 1 V3 H8.5 V7 H4 V9 Z" fill="#0000ff"/></svg><div class="t" style="left:623px;top:188px;font-size:10.8px;color:#808080">Cfg_Profile</div><div class="t" style="right:170px;top:188px;font-size:10.8px;color:#000">0</div><svg class="a" style="left:954px;top:188px" width="10" height="10" viewBox="0 0 10 10"><path d="M0 5 L4 1 V3 H8.5 V7 H4 V9 Z" fill="#0000ff"/></svg><div class="t" style="left:623px;top:202px;font-size:10.8px;color:#808080">Cfg_DirectionSource</div><div class="t" style="right:170px;top:202px;font-size:10.8px;color:#000">0</div><svg class="a" style="left:954px;top:202px" width="10" height="10" viewBox="0 0 10 10"><path d="M0 5 L4 1 V3 H8.5 V7 H4 V9 Z" fill="#0000ff"/></svg><div class="t" style="left:623px;top:216px;font-size:10.8px;color:#808080">Cfg_MotorNP_Hz</div><div class="t" style="right:170px;top:216px;font-size:10.8px;color:#000">75.0</div><svg class="a" style="left:954px;top:216px" width="10" height="10" viewBox="0 0 10 10"><path d="M0 5 L4 1 V3 H8.5 V7 H4 V9 Z" fill="#0000ff"/></svg><div class="t" style="left:623px;top:230px;font-size:10.8px;color:#808080">Cfg_MotorNP_RPM</div><div class="t" style="right:170px;top:230px;font-size:10.8px;color:#000">1725.0</div><svg class="a" style="left:954px;top:230px" width="10" height="10" viewBox="0 0 10 10"><path d="M0 5 L4 1 V3 H8.5 V7 H4 V9 Z" fill="#0000ff"/></svg><div class="t" style="left:623px;top:244px;font-size:10.8px;color:#808080">Set_Direction</div><div class="t" style="right:170px;top:244px;font-size:10.8px;color:#000">0</div><svg class="a" style="left:954px;top:244px" width="10" height="10" viewBox="0 0 10 10"><path d="M0 5 L4 1 V3 H8.5 V7 H4 V9 Z" fill="#0000ff"/></svg><div class="t" style="left:623px;top:258px;font-size:10.8px;color:#808080">Set_Speed</div><div class="t" style="right:170px;top:258px;font-size:10.8px;color:#000">35.0</div><svg class="a" style="left:954px;top:258px" width="10" height="10" viewBox="0 0 10 10"><path d="M0 5 L4 1 V3 H8.5 V7 H4 V9 Z" fill="#0000ff"/></svg><div class="t" style="left:623px;top:272px;font-size:10.8px;color:#808080">Set_AccelRate</div><div class="t" style="right:170px;top:272px;font-size:10.8px;color:#000">30.0</div><svg class="a" style="left:954px;top:272px" width="10" height="10" viewBox="0 0 10 10"><path d="M0 5 L4 1 V3 H8.5 V7 H4 V9 Z" fill="#0000ff"/></svg><div class="t" style="left:623px;top:286px;font-size:10.8px;color:#808080">Set_DecelRate</div><div class="t" style="right:170px;top:286px;font-size:10.8px;color:#000">30.0</div><svg class="a" style="left:954px;top:286px" width="10" height="10" viewBox="0 0 10 10"><path d="M0 5 L4 1 V3 H8.5 V7 H4 V9 Z" fill="#0000ff"/></svg><div class="t" style="left:623px;top:300px;font-size:10.8px;color:#808080">Cmd_Start</div><div class="t" style="right:170px;top:300px;font-size:10.8px;color:#000">0</div><svg class="a" style="left:954px;top:300px" width="10" height="10" viewBox="0 0 10 10"><path d="M0 5 L4 1 V3 H8.5 V7 H4 V9 Z" fill="#0000ff"/></svg><div class="t" style="left:623px;top:314px;font-size:10.8px;color:#808080">Cmd_Stop</div><div class="t" style="right:170px;top:314px;font-size:10.8px;color:#000">0</div><svg class="a" style="left:954px;top:314px" width="10" height="10" viewBox="0 0 10 10"><path d="M0 5 L4 1 V3 H8.5 V7 H4 V9 Z" fill="#0000ff"/></svg><div class="t" style="left:623px;top:328px;font-size:10.8px;color:#808080">Cmd_Reset</div><div class="t" style="right:170px;top:328px;font-size:10.8px;color:#000">0</div><svg class="a" style="left:954px;top:328px" width="10" height="10" viewBox="0 0 10 10"><path d="M0 5 L4 1 V3 H8.5 V7 H4 V9 Z" fill="#0000ff"/></svg><div class="t" style="left:623px;top:342px;font-size:10.8px;color:#808080">Sts_bNotReady</div><div class="t" style="right:170px;top:342px;font-size:10.8px;color:#000">2#0000_0000_0000_0000_0000_0000_0000_0001</div><svg class="a" style="left:954px;top:342px" width="10" height="10" viewBox="0 0 10 10"><path d="M0 5 L4 1 V3 H8.5 V7 H4 V9 Z" fill="#0000ff"/></svg><div class="t" style="left:623px;top:356px;font-size:10.8px;color:#808080">Sts_bWarning</div><div class="t" style="right:170px;top:356px;font-size:10.8px;color:#000">2#0000_0000_0000_0000_0000_0000_0000_0000</div><svg class="a" style="left:954px;top:356px" width="10" height="10" viewBox="0 0 10 10"><path d="M0 5 L4 1 V3 H8.5 V7 H4 V9 Z" fill="#0000ff"/></svg><div class="t" style="left:623px;top:370px;font-size:10.8px;color:#808080">Val_SpeedFdbk</div><div class="t" style="right:170px;top:370px;font-size:10.8px;color:#000">0.0</div><svg class="a" style="left:954px;top:370px" width="10" height="10" viewBox="0 0 10 10"><path d="M0 5 L4 1 V3 H8.5 V7 H4 V9 Z" fill="#0000ff"/></svg><div class="t" style="left:623px;top:384px;font-size:10.8px;color:#808080">Val_SpeedFdbk_MotorRPM</div><div class="t" style="right:170px;top:384px;font-size:10.8px;color:#000">0.0</div><svg class="a" style="left:954px;top:384px" width="10" height="10" viewBox="0 0 10 10"><path d="M0 5 L4 1 V3 H8.5 V7 H4 V9 Z" fill="#0000ff"/></svg><div class="a" style="left:387px;top:468px;width:31px;height:1px;background:#b0b0b0"></div><div class="a" style="left:583px;top:468px;width:39px;height:1px;background:#b0b0b0"></div><div class="a" style="left:989px;top:468px;width:119px;height:1px;background:#b0b0b0"></div><div class="t" style="left:843px;top:433px;width:200px;margin-left:-100px;text-align:center;font-size:10.8px;color:#808080">VFD 1 Desc</div><div class="a" style="left:418px;top:447px;width:165px;height:57px;background:#f0f0f0;border:1px solid #adadad"></div><div class="a" style="left:419px;top:448px;width:163px;height:13px;background:#dcdcdc;border-bottom:1px solid #adadad"></div><div class="t" style="left:426px;top:449px;font-size:10.8px;color:#000">COP</div><div class="t" style="left:426px;top:463px;font-size:10.8px;color:#808080">Source</div><div class="t" style="right:550px;top:463px;font-size:10.8px;color:#000;letter-spacing:-0.2px">Module_SIC1_PF525:I</div><div class="t" style="left:426px;top:477px;font-size:10.8px;color:#808080">Dest</div><div class="t" style="right:550px;top:477px;font-size:10.8px;color:#000;letter-spacing:-0.2px">SIC1_PF525_Inp</div><div class="t" style="left:426px;top:491px;font-size:10.8px;color:#808080">Length</div><div class="t" style="right:550px;top:491px;font-size:10.8px;color:#000">1</div><div class="a" style="left:622px;top:447px;width:367px;height:211px;background:#f0f0f0;border:1px solid #adadad"></div><div class="a" style="left:623px;top:448px;width:365px;height:13px;background:#dcdcdc;border-bottom:1px solid #adadad"></div><div class="t" style="left:630px;top:449px;font-size:10.8px;color:#000">raC_Dvc_PF525</div><div class="t" style="left:630px;top:463px;font-size:10.8px;color:#808080">raC_Dvc_PF525</div><div class="t" style="right:163px;top:463px;font-size:10.8px;color:#000;letter-spacing:-0.2px">SIC1_PF525</div><div class="a" style="left:966px;top:462px;width:17px;height:12px;background:#e1e1e1;border:1px solid #adadad"></div><svg class="a" style="left:966px;top:462px" width="17" height="12" viewBox="0 0 17 12"><rect x="5" y="9" width="1.2" height="1.2" fill="#300030"/><rect x="8" y="9" width="1.2" height="1.2" fill="#300030"/><rect x="11" y="9" width="1.2" height="1.2" fill="#300030"/></svg><div class="t" style="left:630px;top:477px;font-size:10.8px;color:#808080">Ref_Module</div><div class="t" style="right:163px;top:477px;font-size:10.8px;color:#000;letter-spacing:-0.2px">Module_SIC1_PF525</div><div class="t" style="left:630px;top:491px;font-size:10.8px;color:#808080">Ref_Ctrl_Set</div><div class="t" style="right:163px;top:491px;font-size:10.8px;color:#000;letter-spacing:-0.2px">SIC1_PF525_CtrlSet</div><div class="t" style="left:630px;top:505px;font-size:10.8px;color:#808080">Ref_Ctrl_Cmd</div><div class="t" style="right:163px;top:505px;font-size:10.8px;color:#000;letter-spacing:-0.2px">SIC1_PF525_CtrlCmd</div><div class="t" style="left:630px;top:519px;font-size:10.8px;color:#808080">Ref_Ctrl_Sts</div><div class="t" style="right:163px;top:519px;font-size:10.8px;color:#000;letter-spacing:-0.2px">SIC1_PF525_CtrlSts</div><div class="t" style="left:630px;top:533px;font-size:10.8px;color:#808080">Inp_I</div><div class="t" style="right:163px;top:533px;font-size:10.8px;color:#000;letter-spacing:-0.2px">SIC1_PF525_Inp</div><div class="t" style="left:630px;top:547px;font-size:10.8px;color:#808080">Inp_MotorFLA</div><div class="t" style="right:163px;top:547px;font-size:10.8px;color:#000;letter-spacing:-0.2px">SIC1_PF525_MotorFLA</div><div class="t" style="right:163px;top:561px;font-size:10.8px;color:#000">0.7</div><svg class="a" style="left:961px;top:561px" width="10" height="10" viewBox="0 0 10 10"><path d="M0 5 L4 1 V3 H8.5 V7 H4 V9 Z" fill="#0000ff"/></svg><div class="t" style="left:630px;top:575px;font-size:10.8px;color:#808080">Inf_Lookup</div><div class="t" style="right:163px;top:575px;font-size:10.8px;color:#000;letter-spacing:-0.2px">raC_Dvc_PF525_InfTable</div><div class="t" style="left:630px;top:589px;font-size:10.8px;color:#808080">Out_LogicCommand</div><div class="t" style="right:163px;top:589px;font-size:10.8px;color:#000;letter-spacing:-0.2px">Module_SIC1_PF525:O.LogicCommand</div><div class="t" style="left:630px;top:603px;font-size:10.8px;color:#808080">Out_FreqCommand</div><div class="t" style="right:163px;top:603px;font-size:10.8px;color:#000;letter-spacing:-0.2px">Module_SIC1_PF525:O.FreqCommand</div><div class="t" style="left:630px;top:617px;font-size:10.8px;color:#808080">Val_FreqActual</div><div class="t" style="right:163px;top:617px;font-size:10.8px;color:#000">0.0</div><svg class="a" style="left:961px;top:617px" width="10" height="10" viewBox="0 0 10 10"><path d="M0 5 L4 1 V3 H8.5 V7 H4 V9 Z" fill="#0000ff"/></svg><div class="t" style="left:630px;top:631px;font-size:10.8px;color:#808080">Val_OutputCurrent</div><div class="t" style="right:163px;top:631px;font-size:10.8px;color:#000">0.0</div><svg class="a" style="left:961px;top:631px" width="10" height="10" viewBox="0 0 10 10"><path d="M0 5 L4 1 V3 H8.5 V7 H4 V9 Z" fill="#0000ff"/></svg><div class="t" style="left:630px;top:645px;font-size:10.8px;color:#808080">Sts_bNotReady</div><div class="t" style="right:163px;top:645px;font-size:10.8px;color:#000">2#0000_0000_0000_0000_0000_0000_0000_0000</div><svg class="a" style="left:961px;top:645px" width="10" height="10" viewBox="0 0 10 10"><path d="M0 5 L4 1 V3 H8.5 V7 H4 V9 Z" fill="#0000ff"/></svg><div class="a" style="left:982px;top:117px;height:13px;display:flex;align-items:center"><div style="width:7px;height:1px;background:#b0b0b0"></div><svg width="6" height="13" viewBox="0 0 6 13" style="display:block"><path d="M4.8 1.5 Q1.6 2.5 1.5 5 L1.1 6.5 L1.5 8 Q1.6 10.5 4.8 11.5 M0 6.5 H1.2" stroke="#a0a0a0" stroke-width="1" fill="none"/></svg><span style="font-size:10.8px;color:#b8b8b8;white-space:pre;line-height:13px;padding-left:0.5px;padding-right:0.5px">Sts_Virtual</span><svg width="6" height="13" viewBox="0 0 6 13" style="display:block"><path d="M1.2 1.5 Q4.4 2.5 4.5 5 L4.9 6.5 L4.5 8 Q4.4 10.5 1.2 11.5 M4.8 6.5 H6" stroke="#a0a0a0" stroke-width="1" fill="none"/></svg><div style="width:13px;height:1px;background:#b0b0b0"></div></div><div class="a" style="left:982px;top:131px;height:13px;display:flex;align-items:center"><div style="width:7px;height:7px;background:#00ff00;position:relative"><div style="position:absolute;left:0;top:3px;width:7px;height:1px;background:#b0b0b0"></div></div><svg width="6" height="13" viewBox="0 0 6 13" style="display:block"><path d="M4.8 1.5 Q1.6 2.5 1.5 5 L1.1 6.5 L1.5 8 Q1.6 10.5 4.8 11.5 M0 6.5 H1.2" stroke="#a0a0a0" stroke-width="1" fill="none"/></svg><span style="font-size:10.8px;color:#b8b8b8;white-space:pre;line-height:13px;padding-left:0.5px;padding-right:0.5px">Sts_Available</span><svg width="6" height="13" viewBox="0 0 6 13" style="display:block"><path d="M1.2 1.5 Q4.4 2.5 4.5 5 L4.9 6.5 L4.5 8 Q4.4 10.5 1.2 11.5 M4.8 6.5 H6" stroke="#a0a0a0" stroke-width="1" fill="none"/></svg><div style="width:13px;height:7px;background:#00ff00;position:relative"><div style="position:absolute;left:0;top:3px;width:13px;height:1px;background:#b0b0b0"></div></div></div><div class="a" style="left:982px;top:145px;height:13px;display:flex;align-items:center"><div style="width:7px;height:1px;background:#b0b0b0"></div><svg width="6" height="13" viewBox="0 0 6 13" style="display:block"><path d="M4.8 1.5 Q1.6 2.5 1.5 5 L1.1 6.5 L1.5 8 Q1.6 10.5 4.8 11.5 M0 6.5 H1.2" stroke="#a0a0a0" stroke-width="1" fill="none"/></svg><span style="font-size:10.8px;color:#b8b8b8;white-space:pre;line-height:13px;padding-left:0.5px;padding-right:0.5px">Sts_Warning</span><svg width="6" height="13" viewBox="0 0 6 13" style="display:block"><path d="M1.2 1.5 Q4.4 2.5 4.5 5 L4.9 6.5 L4.5 8 Q4.4 10.5 1.2 11.5 M4.8 6.5 H6" stroke="#a0a0a0" stroke-width="1" fill="none"/></svg><div style="width:13px;height:1px;background:#b0b0b0"></div></div><div class="a" style="left:982px;top:159px;height:13px;display:flex;align-items:center"><div style="width:7px;height:1px;background:#b0b0b0"></div><svg width="6" height="13" viewBox="0 0 6 13" style="display:block"><path d="M4.8 1.5 Q1.6 2.5 1.5 5 L1.1 6.5 L1.5 8 Q1.6 10.5 4.8 11.5 M0 6.5 H1.2" stroke="#a0a0a0" stroke-width="1" fill="none"/></svg><span style="font-size:10.8px;color:#b8b8b8;white-space:pre;line-height:13px;padding-left:0.5px;padding-right:0.5px">Sts_Faulted</span><svg width="6" height="13" viewBox="0 0 6 13" style="display:block"><path d="M1.2 1.5 Q4.4 2.5 4.5 5 L4.9 6.5 L4.5 8 Q4.4 10.5 1.2 11.5 M4.8 6.5 H6" stroke="#a0a0a0" stroke-width="1" fill="none"/></svg><div style="width:13px;height:1px;background:#b0b0b0"></div></div><div class="a" style="left:982px;top:173px;height:13px;display:flex;align-items:center"><div style="width:7px;height:1px;background:#b0b0b0"></div><svg width="6" height="13" viewBox="0 0 6 13" style="display:block"><path d="M4.8 1.5 Q1.6 2.5 1.5 5 L1.1 6.5 L1.5 8 Q1.6 10.5 4.8 11.5 M0 6.5 H1.2" stroke="#a0a0a0" stroke-width="1" fill="none"/></svg><span style="font-size:10.8px;color:#b8b8b8;white-space:pre;line-height:13px;padding-left:0.5px;padding-right:0.5px">Sts_Ready</span><svg width="6" height="13" viewBox="0 0 6 13" style="display:block"><path d="M1.2 1.5 Q4.4 2.5 4.5 5 L4.9 6.5 L4.5 8 Q4.4 10.5 1.2 11.5 M4.8 6.5 H6" stroke="#a0a0a0" stroke-width="1" fill="none"/></svg><div style="width:13px;height:1px;background:#b0b0b0"></div></div><div class="a" style="left:982px;top:187px;height:13px;display:flex;align-items:center"><div style="width:7px;height:1px;background:#b0b0b0"></div><svg width="6" height="13" viewBox="0 0 6 13" style="display:block"><path d="M4.8 1.5 Q1.6 2.5 1.5 5 L1.1 6.5 L1.5 8 Q1.6 10.5 4.8 11.5 M0 6.5 H1.2" stroke="#a0a0a0" stroke-width="1" fill="none"/></svg><span style="font-size:10.8px;color:#b8b8b8;white-space:pre;line-height:13px;padding-left:0.5px;padding-right:0.5px">Sts_Running</span><svg width="6" height="13" viewBox="0 0 6 13" style="display:block"><path d="M1.2 1.5 Q4.4 2.5 4.5 5 L4.9 6.5 L4.5 8 Q4.4 10.5 1.2 11.5 M4.8 6.5 H6" stroke="#a0a0a0" stroke-width="1" fill="none"/></svg><div style="width:13px;height:1px;background:#b0b0b0"></div></div><div class="a" style="left:982px;top:201px;height:13px;display:flex;align-items:center"><div style="width:7px;height:1px;background:#b0b0b0"></div><svg width="6" height="13" viewBox="0 0 6 13" style="display:block"><path d="M4.8 1.5 Q1.6 2.5 1.5 5 L1.1 6.5 L1.5 8 Q1.6 10.5 4.8 11.5 M0 6.5 H1.2" stroke="#a0a0a0" stroke-width="1" fill="none"/></svg><span style="font-size:10.8px;color:#b8b8b8;white-space:pre;line-height:13px;padding-left:0.5px;padding-right:0.5px">Sts_AtSpeed</span><svg width="6" height="13" viewBox="0 0 6 13" style="display:block"><path d="M1.2 1.5 Q4.4 2.5 4.5 5 L4.9 6.5 L4.5 8 Q4.4 10.5 1.2 11.5 M4.8 6.5 H6" stroke="#a0a0a0" stroke-width="1" fill="none"/></svg><div style="width:13px;height:1px;background:#b0b0b0"></div></div><div class="a" style="left:982px;top:215px;height:13px;display:flex;align-items:center"><div style="width:7px;height:7px;background:#00ff00;position:relative"><div style="position:absolute;left:0;top:3px;width:7px;height:1px;background:#b0b0b0"></div></div><svg width="6" height="13" viewBox="0 0 6 13" style="display:block"><path d="M4.8 1.5 Q1.6 2.5 1.5 5 L1.1 6.5 L1.5 8 Q1.6 10.5 4.8 11.5 M0 6.5 H1.2" stroke="#a0a0a0" stroke-width="1" fill="none"/></svg><span style="font-size:10.8px;color:#b8b8b8;white-space:pre;line-height:13px;padding-left:0.5px;padding-right:0.5px">Sts_ZeroSpeed</span><svg width="6" height="13" viewBox="0 0 6 13" style="display:block"><path d="M1.2 1.5 Q4.4 2.5 4.5 5 L4.9 6.5 L4.5 8 Q4.4 10.5 1.2 11.5 M4.8 6.5 H6" stroke="#a0a0a0" stroke-width="1" fill="none"/></svg><div style="width:13px;height:7px;background:#00ff00;position:relative"><div style="position:absolute;left:0;top:3px;width:13px;height:1px;background:#b0b0b0"></div></div></div><div class="a" style="left:982px;top:229px;height:13px;display:flex;align-items:center"><div style="width:7px;height:1px;background:#b0b0b0"></div><svg width="6" height="13" viewBox="0 0 6 13" style="display:block"><path d="M4.8 1.5 Q1.6 2.5 1.5 5 L1.1 6.5 L1.5 8 Q1.6 10.5 4.8 11.5 M0 6.5 H1.2" stroke="#a0a0a0" stroke-width="1" fill="none"/></svg><span style="font-size:10.8px;color:#b8b8b8;white-space:pre;line-height:13px;padding-left:0.5px;padding-right:0.5px">Sts_Accelerating</span><svg width="6" height="13" viewBox="0 0 6 13" style="display:block"><path d="M1.2 1.5 Q4.4 2.5 4.5 5 L4.9 6.5 L4.5 8 Q4.4 10.5 1.2 11.5 M4.8 6.5 H6" stroke="#a0a0a0" stroke-width="1" fill="none"/></svg><div style="width:13px;height:1px;background:#b0b0b0"></div></div><div class="a" style="left:982px;top:243px;height:13px;display:flex;align-items:center"><div style="width:7px;height:1px;background:#b0b0b0"></div><svg width="6" height="13" viewBox="0 0 6 13" style="display:block"><path d="M4.8 1.5 Q1.6 2.5 1.5 5 L1.1 6.5 L1.5 8 Q1.6 10.5 4.8 11.5 M0 6.5 H1.2" stroke="#a0a0a0" stroke-width="1" fill="none"/></svg><span style="font-size:10.8px;color:#b8b8b8;white-space:pre;line-height:13px;padding-left:0.5px;padding-right:0.5px">Sts_Decelerating</span><svg width="6" height="13" viewBox="0 0 6 13" style="display:block"><path d="M1.2 1.5 Q4.4 2.5 4.5 5 L4.9 6.5 L4.5 8 Q4.4 10.5 1.2 11.5 M4.8 6.5 H6" stroke="#a0a0a0" stroke-width="1" fill="none"/></svg><div style="width:13px;height:1px;background:#b0b0b0"></div></div><div class="a" style="left:982px;top:257px;height:13px;display:flex;align-items:center"><div style="width:7px;height:1px;background:#b0b0b0"></div><svg width="6" height="13" viewBox="0 0 6 13" style="display:block"><path d="M4.8 1.5 Q1.6 2.5 1.5 5 L1.1 6.5 L1.5 8 Q1.6 10.5 4.8 11.5 M0 6.5 H1.2" stroke="#a0a0a0" stroke-width="1" fill="none"/></svg><span style="font-size:10.8px;color:#b8b8b8;white-space:pre;line-height:13px;padding-left:0.5px;padding-right:0.5px">Sts_ActDir</span><svg width="6" height="13" viewBox="0 0 6 13" style="display:block"><path d="M1.2 1.5 Q4.4 2.5 4.5 5 L4.9 6.5 L4.5 8 Q4.4 10.5 1.2 11.5 M4.8 6.5 H6" stroke="#a0a0a0" stroke-width="1" fill="none"/></svg><div style="width:13px;height:1px;background:#b0b0b0"></div></div><div class="a" style="left:982px;top:271px;height:13px;display:flex;align-items:center"><div style="width:7px;height:1px;background:#b0b0b0"></div><svg width="6" height="13" viewBox="0 0 6 13" style="display:block"><path d="M4.8 1.5 Q1.6 2.5 1.5 5 L1.1 6.5 L1.5 8 Q1.6 10.5 4.8 11.5 M0 6.5 H1.2" stroke="#a0a0a0" stroke-width="1" fill="none"/></svg><span style="font-size:10.8px;color:#b8b8b8;white-space:pre;line-height:13px;padding-left:0.5px;padding-right:0.5px">Sts_CmdDir</span><svg width="6" height="13" viewBox="0 0 6 13" style="display:block"><path d="M1.2 1.5 Q4.4 2.5 4.5 5 L4.9 6.5 L4.5 8 Q4.4 10.5 1.2 11.5 M4.8 6.5 H6" stroke="#a0a0a0" stroke-width="1" fill="none"/></svg><div style="width:13px;height:1px;background:#b0b0b0"></div></div><div class="a" style="left:989px;top:476px;height:13px;display:flex;align-items:center"><div style="width:7px;height:1px;background:#b0b0b0"></div><svg width="6" height="13" viewBox="0 0 6 13" style="display:block"><path d="M4.8 1.5 Q1.6 2.5 1.5 5 L1.1 6.5 L1.5 8 Q1.6 10.5 4.8 11.5 M0 6.5 H1.2" stroke="#a0a0a0" stroke-width="1" fill="none"/></svg><span style="font-size:10.8px;color:#b8b8b8;white-space:pre;line-height:13px;padding-left:0.5px;padding-right:0.5px">Sts_Virtual</span><svg width="6" height="13" viewBox="0 0 6 13" style="display:block"><path d="M1.2 1.5 Q4.4 2.5 4.5 5 L4.9 6.5 L4.5 8 Q4.4 10.5 1.2 11.5 M4.8 6.5 H6" stroke="#a0a0a0" stroke-width="1" fill="none"/></svg><div style="width:13px;height:1px;background:#b0b0b0"></div></div><div class="a" style="left:989px;top:490px;height:13px;display:flex;align-items:center"><div style="width:7px;height:7px;background:#00ff00;position:relative"><div style="position:absolute;left:0;top:3px;width:7px;height:1px;background:#b0b0b0"></div></div><svg width="6" height="13" viewBox="0 0 6 13" style="display:block"><path d="M4.8 1.5 Q1.6 2.5 1.5 5 L1.1 6.5 L1.5 8 Q1.6 10.5 4.8 11.5 M0 6.5 H1.2" stroke="#a0a0a0" stroke-width="1" fill="none"/></svg><span style="font-size:10.8px;color:#b8b8b8;white-space:pre;line-height:13px;padding-left:0.5px;padding-right:0.5px">Sts_Connected</span><svg width="6" height="13" viewBox="0 0 6 13" style="display:block"><path d="M1.2 1.5 Q4.4 2.5 4.5 5 L4.9 6.5 L4.5 8 Q4.4 10.5 1.2 11.5 M4.8 6.5 H6" stroke="#a0a0a0" stroke-width="1" fill="none"/></svg><div style="width:13px;height:7px;background:#00ff00;position:relative"><div style="position:absolute;left:0;top:3px;width:13px;height:1px;background:#b0b0b0"></div></div></div><div class="a" style="left:989px;top:504px;height:13px;display:flex;align-items:center"><div style="width:7px;height:7px;background:#00ff00;position:relative"><div style="position:absolute;left:0;top:3px;width:7px;height:1px;background:#b0b0b0"></div></div><svg width="6" height="13" viewBox="0 0 6 13" style="display:block"><path d="M4.8 1.5 Q1.6 2.5 1.5 5 L1.1 6.5 L1.5 8 Q1.6 10.5 4.8 11.5 M0 6.5 H1.2" stroke="#a0a0a0" stroke-width="1" fill="none"/></svg><span style="font-size:10.8px;color:#b8b8b8;white-space:pre;line-height:13px;padding-left:0.5px;padding-right:0.5px">Sts_Available</span><svg width="6" height="13" viewBox="0 0 6 13" style="display:block"><path d="M1.2 1.5 Q4.4 2.5 4.5 5 L4.9 6.5 L4.5 8 Q4.4 10.5 1.2 11.5 M4.8 6.5 H6" stroke="#a0a0a0" stroke-width="1" fill="none"/></svg><div style="width:13px;height:7px;background:#00ff00;position:relative"><div style="position:absolute;left:0;top:3px;width:13px;height:1px;background:#b0b0b0"></div></div></div><div class="a" style="left:989px;top:518px;height:13px;display:flex;align-items:center"><div style="width:7px;height:1px;background:#b0b0b0"></div><svg width="6" height="13" viewBox="0 0 6 13" style="display:block"><path d="M4.8 1.5 Q1.6 2.5 1.5 5 L1.1 6.5 L1.5 8 Q1.6 10.5 4.8 11.5 M0 6.5 H1.2" stroke="#a0a0a0" stroke-width="1" fill="none"/></svg><span style="font-size:10.8px;color:#b8b8b8;white-space:pre;line-height:13px;padding-left:0.5px;padding-right:0.5px">Sts_Warning</span><svg width="6" height="13" viewBox="0 0 6 13" style="display:block"><path d="M1.2 1.5 Q4.4 2.5 4.5 5 L4.9 6.5 L4.5 8 Q4.4 10.5 1.2 11.5 M4.8 6.5 H6" stroke="#a0a0a0" stroke-width="1" fill="none"/></svg><div style="width:13px;height:1px;background:#b0b0b0"></div></div><div class="a" style="left:989px;top:532px;height:13px;display:flex;align-items:center"><div style="width:7px;height:1px;background:#b0b0b0"></div><svg width="6" height="13" viewBox="0 0 6 13" style="display:block"><path d="M4.8 1.5 Q1.6 2.5 1.5 5 L1.1 6.5 L1.5 8 Q1.6 10.5 4.8 11.5 M0 6.5 H1.2" stroke="#a0a0a0" stroke-width="1" fill="none"/></svg><span style="font-size:10.8px;color:#b8b8b8;white-space:pre;line-height:13px;padding-left:0.5px;padding-right:0.5px">Sts_Faulted</span><svg width="6" height="13" viewBox="0 0 6 13" style="display:block"><path d="M1.2 1.5 Q4.4 2.5 4.5 5 L4.9 6.5 L4.5 8 Q4.4 10.5 1.2 11.5 M4.8 6.5 H6" stroke="#a0a0a0" stroke-width="1" fill="none"/></svg><div style="width:13px;height:1px;background:#b0b0b0"></div></div><div class="a" style="left:989px;top:546px;height:13px;display:flex;align-items:center"><div style="width:7px;height:1px;background:#b0b0b0"></div><svg width="6" height="13" viewBox="0 0 6 13" style="display:block"><path d="M4.8 1.5 Q1.6 2.5 1.5 5 L1.1 6.5 L1.5 8 Q1.6 10.5 4.8 11.5 M0 6.5 H1.2" stroke="#a0a0a0" stroke-width="1" fill="none"/></svg><span style="font-size:10.8px;color:#b8b8b8;white-space:pre;line-height:13px;padding-left:0.5px;padding-right:0.5px">Sts_Ready</span><svg width="6" height="13" viewBox="0 0 6 13" style="display:block"><path d="M1.2 1.5 Q4.4 2.5 4.5 5 L4.9 6.5 L4.5 8 Q4.4 10.5 1.2 11.5 M4.8 6.5 H6" stroke="#a0a0a0" stroke-width="1" fill="none"/></svg><div style="width:13px;height:1px;background:#b0b0b0"></div></div><div class="a" style="left:989px;top:560px;height:13px;display:flex;align-items:center"><div style="width:7px;height:1px;background:#b0b0b0"></div><svg width="6" height="13" viewBox="0 0 6 13" style="display:block"><path d="M4.8 1.5 Q1.6 2.5 1.5 5 L1.1 6.5 L1.5 8 Q1.6 10.5 4.8 11.5 M0 6.5 H1.2" stroke="#a0a0a0" stroke-width="1" fill="none"/></svg><span style="font-size:10.8px;color:#b8b8b8;white-space:pre;line-height:13px;padding-left:0.5px;padding-right:0.5px">Sts_Active</span><svg width="6" height="13" viewBox="0 0 6 13" style="display:block"><path d="M1.2 1.5 Q4.4 2.5 4.5 5 L4.9 6.5 L4.5 8 Q4.4 10.5 1.2 11.5 M4.8 6.5 H6" stroke="#a0a0a0" stroke-width="1" fill="none"/></svg><div style="width:13px;height:1px;background:#b0b0b0"></div></div><div class="a" style="left:989px;top:574px;height:13px;display:flex;align-items:center"><div style="width:7px;height:7px;background:#00ff00;position:relative"><div style="position:absolute;left:0;top:3px;width:7px;height:1px;background:#b0b0b0"></div></div><svg width="6" height="13" viewBox="0 0 6 13" style="display:block"><path d="M4.8 1.5 Q1.6 2.5 1.5 5 L1.1 6.5 L1.5 8 Q1.6 10.5 4.8 11.5 M0 6.5 H1.2" stroke="#a0a0a0" stroke-width="1" fill="none"/></svg><span style="font-size:10.8px;color:#b8b8b8;white-space:pre;line-height:13px;padding-left:0.5px;padding-right:0.5px">Sts_ZeroSpeed</span><svg width="6" height="13" viewBox="0 0 6 13" style="display:block"><path d="M1.2 1.5 Q4.4 2.5 4.5 5 L4.9 6.5 L4.5 8 Q4.4 10.5 1.2 11.5 M4.8 6.5 H6" stroke="#a0a0a0" stroke-width="1" fill="none"/></svg><div style="width:13px;height:7px;background:#00ff00;position:relative"><div style="position:absolute;left:0;top:3px;width:13px;height:1px;background:#b0b0b0"></div></div></div></body></html>
